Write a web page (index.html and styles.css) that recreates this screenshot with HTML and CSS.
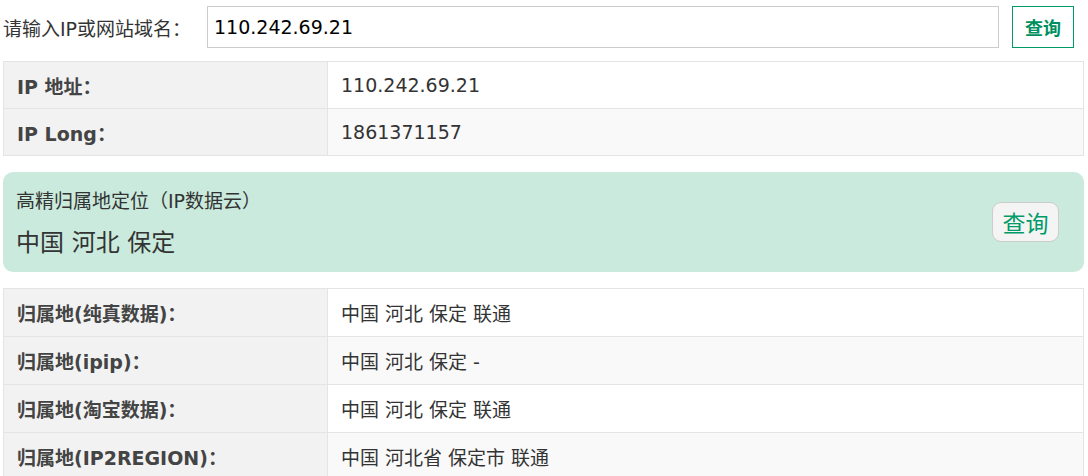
FILE: index.html
```html
<!DOCTYPE html>
<html lang="zh-CN">
<head>
<meta charset="utf-8">
<title>IP查询</title>
<link rel="stylesheet" href="styles.css">
</head>
<body>
<div class="page">
  <form class="search">
    <label class="search-label" for="ip">请输入IP或网站域名：</label>
    <input class="search-input" id="ip" type="text" value="110.242.69.21">
    <button class="search-btn" type="button">查询</button>
  </form>

  <table class="info info-top">
    <tr><th>IP 地址：</th><td>110.242.69.21</td></tr>
    <tr><th>IP Long：</th><td>1861371157</td></tr>
  </table>

  <div class="hp">
    <div class="hp-text">
      <div class="hp-title">高精归属地定位（IP数据云）</div>
      <div class="hp-loc">中国 河北 保定</div>
    </div>
    <button class="hp-btn" type="button">查询</button>
  </div>

  <table class="info info-bottom">
    <tr><th>归属地(纯真数据)：</th><td>中国 河北 保定 联通</td></tr>
    <tr><th>归属地(ipip)：</th><td>中国 河北 保定 -</td></tr>
    <tr><th>归属地(淘宝数据)：</th><td>中国 河北 保定 联通</td></tr>
    <tr><th>归属地(IP2REGION)：</th><td>中国 河北省 保定市 联通</td></tr>
  </table>
</div>
</body>
</html>
```

FILE: styles.css
```css
* { box-sizing: border-box; }
html, body { margin: 0; padding: 0; background: #fff; }
body {
  font-family: "DejaVu Sans", "Noto Sans CJK SC", sans-serif;
  font-size: 19px;
  color: #333;
}
.page { padding: 6px 4px 0 3px; }

.search {
  display: flex;
  align-items: stretch;
  height: 42px;
  margin: 0;
}
.search-label {
  width: 204px;
  display: flex;
  align-items: center;
  color: #333;
  font-size: 19px;
}
.search-input {
  flex: 1;
  height: 42px;
  border: 1px solid #ccc;
  padding: 0 6px;
  font-family: "DejaVu Sans", "Noto Sans CJK SC", sans-serif;
  font-size: 19px;
  color: #000;
  outline: none;
  margin: 0;
}
.search-btn {
  width: 62px;
  height: 42px;
  margin: 0 10px 0 13px;
  border: 1px solid #009b68;
  background: #fff;
  color: #00905f;
  font-family: "DejaVu Sans", "Noto Sans CJK SC", sans-serif;
  font-weight: bold;
  font-size: 18px;
  padding: 0;
}

.info {
  width: 100%;
  border-collapse: collapse;
}
.info-top { margin-top: 13px; }
.info th, .info td {
  border: 1px solid #e4e4e4;
  height: 48px;
  padding: 0 13px;
  text-align: left;
  font-size: 19px;
}
.info-top th, .info-top td { height: 47px; }
.info th {
  width: 324px;
  background: #f2f2f2;
  color: #444;
  font-weight: bold;
}
.info td { background: #fff; color: #333; }
.info tr:nth-child(even) td { background: #f9f9f9; }

.hp {
  margin-top: 16px;
  background: #c9eadc;
  border-radius: 10px;
  padding: 14px 25px 14px 13px;
  display: flex;
  align-items: center;
  justify-content: space-between;
}
.hp-title { line-height: 30px; font-size: 19px; color: #333; }
.hp-loc { line-height: 30px; margin-top: 12px; font-size: 24px; color: #333; }
.hp-btn {
  width: 67px;
  height: 40px;
  border: 1px solid #ccc;
  border-radius: 9px;
  background: #f4f4f4;
  color: #009b68;
  font-family: "DejaVu Sans", "Noto Sans CJK SC", sans-serif;
  font-size: 23px;
  padding: 0;
}
.info-bottom { margin-top: 16px; }
```
